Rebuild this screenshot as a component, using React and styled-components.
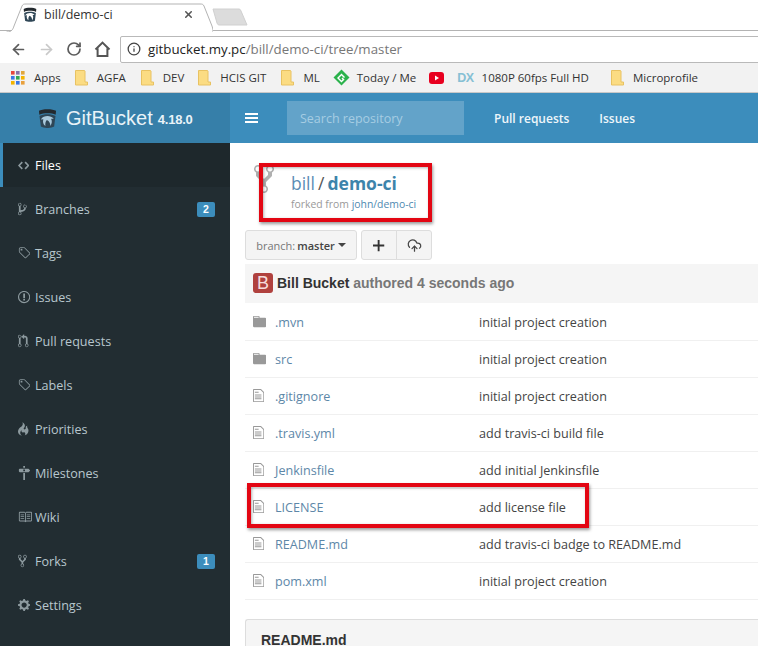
import React from 'react';
import styled, { createGlobalStyle } from 'styled-components';
import { ArrowLeft, ArrowRight, RotateCw, Info, X, CloudUpload } from 'lucide-react';

const Global = createGlobalStyle`
  html, body { margin: 0; padding: 0; background: #fff; }
  * { box-sizing: border-box; }
`;

const P = {
  code: [14, 'M9.5 3L8 4.5 11.5 8 8 11.5 9.5 13 14 8 9.5 3zm-5 0L0 8l4.5 5L6 11.5 2.5 8 6 4.5 4.5 3z'],
  branch: [10, 'M10 5c0-1.11-.89-2-2-2a1.993 1.993 0 0 0-1 3.72v.3c-.02.52-.23.98-.63 1.38-.4.4-.86.61-1.38.63-.83.02-1.48.16-2 .45V4.72a1.993 1.993 0 0 0-1-3.72C.88 1 0 1.89 0 3a2 2 0 0 0 1 1.72v6.56c-.59.35-1 .99-1 1.72 0 1.11.89 2 2 2 1.11 0 2-.89 2-2 0-.53-.2-1-.53-1.36.09-.06.48-.41.59-.47.25-.11.56-.17.94-.17 1.05-.05 1.95-.45 2.75-1.25S8.95 7.77 9 6.73h-.02C9.59 6.37 10 5.73 10 5zM2 1.8c.66 0 1.2.55 1.2 1.2 0 .65-.55 1.2-1.2 1.2C1.35 4.2.8 3.65.8 3c0-.65.55-1.2 1.2-1.2zm0 12.41c-.66 0-1.2-.55-1.2-1.2 0-.65.55-1.2 1.2-1.2.65 0 1.2.55 1.2 1.2 0 .65-.55 1.2-1.2 1.2zm6-8c-.66 0-1.2-.55-1.2-1.2 0-.65.55-1.2 1.2-1.2.65 0 1.2.55 1.2 1.2 0 .65-.55 1.2-1.2 1.2z'],
  tag: [14, 'M7.73 1.73C7.26 1.26 6.62 1 5.96 1H3.5C2.13 1 1 2.13 1 3.5v2.47c0 .66.27 1.3.73 1.77l6.06 6.06c.39.39 1.02.39 1.41 0l4.59-4.59a.996.996 0 0 0 0-1.41L7.73 1.73zM2.38 7.09c-.31-.3-.47-.7-.47-1.13V3.5c0-.88.72-1.59 1.59-1.59h2.47c.42 0 .83.16 1.13.47l6.14 6.13-4.73 4.73-6.13-6.15zM3.01 3h2v2H3V3h.01z'],
  issue: [14, 'M7 2.3c3.14 0 5.7 2.56 5.7 5.7s-2.56 5.7-5.7 5.7A5.71 5.71 0 0 1 1.3 8c0-3.14 2.56-5.7 5.7-5.7zM7 1C3.14 1 0 4.14 0 8s3.14 7 7 7 7-3.14 7-7-3.14-7-7-7zm1 3H6v5h2V4zm0 6H6v2h2v-2z'],
  pull: [12, 'M11 11.28V5c-.03-.78-.34-1.47-.94-2.06C9.46 2.35 8.78 2.03 8 2H7V0L4 3l3 3V4h1c.27.02.48.11.69.31.21.2.3.42.31.69v6.28A1.993 1.993 0 0 0 10 15a1.993 1.993 0 0 0 1-3.72zm-1 2.92c-.66 0-1.2-.55-1.2-1.2 0-.65.55-1.2 1.2-1.2.65 0 1.2.55 1.2 1.2 0 .65-.55 1.2-1.2 1.2zM4 3c0-1.11-.89-2-2-2a1.993 1.993 0 0 0-1 3.72v6.56A1.993 1.993 0 0 0 2 15a1.993 1.993 0 0 0 1-3.72V4.72c.59-.34 1-.98 1-1.72zm-.8 10c0 .66-.55 1.2-1.2 1.2-.65 0-1.2-.55-1.2-1.2 0-.65.55-1.2 1.2-1.2.65 0 1.2.55 1.2 1.2zM2 4.2C1.34 4.2.8 3.65.8 3c0-.65.55-1.2 1.2-1.2.65 0 1.2.55 1.2 1.2 0 .65-.55 1.2-1.2 1.2z'],
  flame: [12, 'M5.05.31c.81 2.17.41 3.38-.52 4.31C3.55 5.67 1.98 6.45.9 7.98c-1.45 2.05-1.7 6.53 3.53 7.7-2.2-1.16-2.67-4.52-.3-6.61-.61 2.03.53 3.33 1.94 2.86 1.39-.47 2.3.53 2.27 1.67-.02.78-.31 1.44-1.13 1.81 3.42-.59 4.78-3.42 4.78-5.56 0-2.84-2.53-3.22-1.25-5.61-1.52.13-2.03 1.13-1.89 2.75.09 1.08-1.02 1.8-1.86 1.33-.67-.41-.66-1.19-.06-1.78C8.18 5.31 8.68 2.45 5.05.32L5.03.3l.2.01z'],
  milestone: [14, 'M8 2H6V0h2v2zm4 5H2c-.55 0-1-.45-1-1V4c0-.55.45-1 1-1h10l2 2-2 2zM8 4H6v2h2V4zM6 16h2V8H6v8z'],
  book: [16, 'M3 5h4v1H3V5zm0 3h4V7H3v1zm0 2h4V9H3v1zm11-5h-4v1h4V5zm0 2h-4v1h4V7zm0 2h-4v1h4V9zm2-6v9c0 .55-.45 1-1 1H9.5l-1 1-1-1H2c-.55 0-1-.45-1-1V3c0-.55.45-1 1-1h5.5l1 1 1-1H15c.55 0 1 .45 1 1zm-8 .5L7.5 3H2v9h6V3.5zm7-.5H9.5l-.5.5V12h6V3z'],
  fork: [10, 'M8 1a1.993 1.993 0 0 0-1 3.72V6L5 8 3 6V4.72A1.993 1.993 0 0 0 2 1a1.993 1.993 0 0 0-1 3.72V6.5l3 3v1.78A1.993 1.993 0 0 0 5 15a1.993 1.993 0 0 0 1-3.72V9.5l3-3V4.72A1.993 1.993 0 0 0 8 1zM2 4.2C1.34 4.2.8 3.65.8 3c0-.65.55-1.2 1.2-1.2.65 0 1.2.55 1.2 1.2 0 .65-.55 1.2-1.2 1.2zm3 10c-.66 0-1.2-.55-1.2-1.2 0-.65.55-1.2 1.2-1.2.65 0 1.2.55 1.2 1.2 0 .65-.55 1.2-1.2 1.2zm3-10c-.66 0-1.2-.55-1.2-1.2 0-.65.55-1.2 1.2-1.2.65 0 1.2.55 1.2 1.2 0 .65-.55 1.2-1.2 1.2z'],
  gear: [14, 'M14 8.77v-1.6l-1.94-.64-.45-1.09.88-1.84-1.13-1.13-1.81.91-1.09-.45-.69-1.92h-1.6l-.63 1.94-1.11.45-1.84-.88-1.13 1.13.91 1.81-.45 1.09L0 7.23v1.59l1.94.64.45 1.09-.88 1.84 1.13 1.13 1.81-.91 1.09.45.69 1.92h1.59l.63-1.94 1.11-.45 1.84.88 1.13-1.13-.92-1.81.47-1.09L14 8.75v.02zM7 11c-1.66 0-3-1.34-3-3s1.34-3 3-3 3 1.34 3 3-1.34 3-3 3z'],
  file: [12, 'M6 5H2V4h4v1zM2 8h7V7H2v1zm0 2h7V9H2v1zm0 2h7v-1H2v1zm10-7.5V14c0 .55-.45 1-1 1H1c-.55 0-1-.45-1-1V2c0-.55.45-1 1-1h7.5L12 4.5zM11 5L8 2H1v12h10V5z'],
  dir: [14, 'M13 4H7V3c0-.66-.31-1-1-1H1c-.55 0-1 .45-1 1v10c0 .55.45 1 1 1h12c.55 0 1-.45 1-1V5c0-.55-.45-1-1-1zM6 4H1V3h5v1z'],
  plus: [12, 'M12 9H7v5H5V9H0V7h5V2h2v5h5v2z'],
};

const Octicon = ({ name, h = 16, color = 'currentColor' }) => {
  const [w, d] = P[name];
  return (
    <svg width={(w * h) / 16} height={h} viewBox={`0 0 ${w} 16`} fill={color} style={{ display: 'block', flex: 'none' }}>
      <path fillRule="evenodd" d={d} />
    </svg>
  );
};

const BucketLogo = ({ size = 20, swoosh = '#a9c9dc' }) => (
  <svg width={size} height={size * 1.1} viewBox="0 0 20 22" style={{ display: 'block', flex: 'none' }}>
    <path d="M1 3 C4 0.6 16 0.6 19 3 L18.6 7 C14 5 6 5 1.4 7 Z" fill="#23292e" />
    <path d="M1.6 8.5 C6 6 14 6 18.4 8.5 L17 19.5 C14 21.6 6 21.6 3 19.5 Z" fill="#2f4656" />
    <path d="M3 12 C6 7.6 13 7.4 16.6 11.2 L13.8 11.4 C15 13.5 14.8 16.5 13 19 C13 16 12 14 9.4 12.6 C8 14 7.4 16 7.8 19 C5.4 17.6 4.8 14.4 5.6 11.8 Z" fill={swoosh} />
  </svg>
);

const HomeIcon = () => (
  <svg width="17" height="16" viewBox="0 0 17 16" fill="none" stroke="#555" strokeWidth="2" style={{ display: 'block' }}>
    <path d="M1.5 8.5 8.5 1.6l7 6.9" />
    <path d="M3.6 7.2V15h9.8V7.2" />
  </svg>
);

const Folder = () => (
  <svg width="13" height="16" viewBox="0 0 13 16" style={{ display: 'block', flex: 'none' }}>
    <path d="M.5.5h9l.5.5v11h2.5v3H.5z" fill="#fbdc83" stroke="#e8c262" />
  </svg>
);

const AppsIcon = () => {
  const c = ['#e8453c', '#8a6fa8', '#e0a63c', '#3b78e7', '#34a853', '#f4b400', '#f4b400', '#3b78e7', '#e8a03c'];
  return (
    <svg width="14" height="14" viewBox="0 0 14 14" style={{ display: 'block', flex: 'none' }}>
      {c.map((f, i) => <rect key={i} x={(i % 3) * 5} y={Math.floor(i / 3) * 5} width="3.6" height="3.6" fill={f} />)}
    </svg>
  );
};

const Feedly = () => (
  <svg width="17" height="17" viewBox="0 0 17 17" style={{ display: 'block', flex: 'none' }}>
    <path d="M8.5.5 16.5 8.5 8.5 16.5.5 8.5z" fill="#2bb24c" />
    <path d="M8.5 4.5 12 8l-1 1-2.5-2.4L6 9l2.5 2.4 1-1-1-1 1-1 2 2-3 3L4 9z" fill="#fff" />
  </svg>
);

const YouTube = () => (
  <svg width="15" height="12" viewBox="0 0 15 12" style={{ display: 'block', flex: 'none' }}>
    <rect width="15" height="12" rx="3" fill="#e8001f" />
    <path d="M6 3.5v5L10 6z" fill="#fff" />
  </svg>
);

const Page = styled.div`
  position: relative;
  width: 758px;
  height: 646px;
  overflow: hidden;
  display: flex;
  flex-direction: column;
  font-family: "Open Sans", sans-serif;
`;

const TabStrip = styled.div`
  height: 31px;
  flex: none;
  background: #fff;
  border-bottom: 1px solid #b3b3b3;
  display: flex;
  align-items: flex-end;
  padding-left: 6px;
`;
const Tab = styled.div`
  position: relative;
  width: 207px;
  height: 29px;
  margin-bottom: -1px;
  display: flex;
  align-items: center;
  padding: 0 19px 4px 17px;
  font: 12.5px "Open Sans", sans-serif;
  color: #333;
  & > svg.shape { position: absolute; left: 0; top: 0; }
  & > *:not(.shape) { position: relative; }
`;
const TabTitle = styled.span`
  flex: 1;
  margin-left: 7px;
`;
const NewTab = styled.svg`
  display: block;
  margin: 0 0 4px -1px;
`;
const Toolbar = styled.div`
  height: 32px;
  flex: none;
  background: #fff;
  display: flex;
  align-items: center;
  padding: 4px 0 0 10px;
  color: #5a5a5a;
`;
const NavButton = styled.span`
  width: 28px;
  height: 24px;
  display: flex;
  align-items: center;
  color: ${(p) => (p.$off ? '#c9c9c9' : '#5c5c5c')};
  margin-right: ${(p) => p.$mr || 0}px;
`;
const Omnibox = styled.div`
  flex: 1;
  height: 27px;
  margin-right: -6px;
  border: 1px solid #b9b9b9;
  border-radius: 2px;
  display: flex;
  align-items: center;
  padding-left: 6px;
  gap: 7px;
  font: 13.3px "Open Sans", sans-serif;
  color: #777;
  white-space: nowrap;
  & b { font-weight: 400; color: #222; }
`;
const Bookmarks = styled.div`
  height: 30px;
  flex: none;
  background: #f2f2f2;
  border-bottom: 1px solid #c8c8c8;
  display: flex;
  align-items: center;
  padding-left: 11px;
  font: 11.5px "Open Sans", sans-serif;
  color: #333;
  white-space: nowrap;
`;
const Mark = styled.span`
  display: flex;
  align-items: center;
  gap: ${(p) => p.$gap || 9}px;
  margin-right: ${(p) => p.$mr}px;
`;
const DxMark = styled.span`
  font: 700 12.5px "Liberation Sans", sans-serif;
  color: #86c0d4;
  letter-spacing: -0.5px;
`;

const Navbar = styled.header`
  height: 50px;
  flex: none;
  display: flex;
  background: #3c8dbc;
  color: #fff;
`;
const Brand = styled.div`
  width: 230px;
  flex: none;
  background: #367fa9;
  display: flex;
  align-items: center;
  padding-left: 38px;
  gap: 9px;
  font-family: "Liberation Sans", sans-serif;
  color: #e9f3f8;
`;
const BrandName = styled.span`
  font-size: 20px;
`;
const BrandVersion = styled.span`
  font-size: 13px;
  font-weight: 700;
  margin: 3px 0 0 -4px;
  letter-spacing: -0.2px;
`;
const Burger = styled.div`
  width: 13px;
  margin-left: 15px;
  align-self: center;
  height: 10px;
  border-top: 2px solid #fff;
  border-bottom: 2px solid #fff;
  position: relative;
  &::after { content: ""; position: absolute; left: 0; right: 0; top: 2px; height: 2px; background: #fff; }
`;
const Search = styled.div`
  width: 177px;
  height: 34px;
  margin: 8px 30px 0 29px;
  background: rgba(255, 255, 255, 0.2);
  color: #a6cde3;
  display: flex;
  align-items: center;
  padding-left: 13px;
  font-size: 12.5px;
`;
const NavLink = styled.span`
  align-self: center;
  font-size: 12px;
  font-weight: 600;
  margin-right: 30px;
  color: #eef6fa;
`;

const Body = styled.div`
  flex: 1;
  display: flex;
  min-height: 0;
`;
const Sidebar = styled.nav`
  width: 230px;
  flex: none;
  background: #222d32;
`;
const Item = styled.div`
  height: 44px;
  display: flex;
  align-items: center;
  padding: 0 15px 0 ${(p) => (p.$active ? 15 : 18)}px;
  border-left: ${(p) => (p.$active ? '3px solid #3c8dbc' : 'none')};
  background: ${(p) => (p.$active ? '#1e282c' : 'transparent')};
  color: ${(p) => (p.$active ? '#fff' : '#b8c7ce')};
  font-size: 12.6px;
`;
const ItemIcon = styled.span`
  width: 17px;
  flex: none;
  color: #8d9a9f;
  display: flex;
  align-items: center;
`;
const ItemLabel = styled.span`
  flex: 1;
`;
const Badge = styled.span`
  background: #3c8dbc;
  color: #fff;
  font: 700 10.5px "Liberation Sans", sans-serif;
  width: 18px;
  height: 15px;
  border-radius: 2px;
  display: flex;
  align-items: center;
  justify-content: center;
`;

const Main = styled.main`
  flex: 1;
  min-width: 0;
  padding-left: 15px;
`;
const RepoHead = styled.div`
  height: 87px;
  position: relative;
  padding: 29px 0 0 46px;
`;
const ForkMark = styled.span`
  position: absolute;
  left: 9px;
  top: 20px;
  color: #b0b0b0;
`;
const RepoTitle = styled.div`
  font-size: 17.5px;
  line-height: 22px;
  color: #5a8db5;
  word-spacing: -1.5px;
  & b { color: #3c84ab; font-weight: 700; }
  & i { font-style: normal; color: #555; }
`;
const ForkedFrom = styled.div`
  font-size: 10.4px;
  line-height: 20px;
  color: #999;
  & span { color: #4f8ab1; }
`;
const ButtonRow = styled.div`
  display: flex;
  gap: 4px;
  height: 30px;
`;
const BtnGroup = styled.div`
  display: flex;
`;
const Btn = styled.div`
  width: ${(p) => p.$w}px;
  height: 30px;
  background: #f4f4f4;
  border: 1px solid #ddd;
  border-radius: ${(p) => p.$r || '3px'};
  margin-left: ${(p) => (p.$join ? '-1px' : 0)};
  display: flex;
  align-items: center;
  justify-content: center;
  gap: 2px;
  font-size: 11px;
  color: #777;
  & b { color: #444; font-weight: 600; }
`;
const Caret = styled.span`
  width: 0;
  height: 0;
  margin-left: 1px;
  border: 4px solid transparent;
  border-top-color: #444;
  border-bottom: 0;
`;
const CommitHead = styled.div`
  height: 40px;
  margin-top: 4px;
  background: linear-gradient(#f5f5f5 39px, #fff 39px);
  display: flex;
  align-items: center;
  padding: 0 0 2px 8px;
  gap: 4px;
  font: 700 14px "Liberation Sans", sans-serif;
  color: #777;
  & b { color: #333; }
`;
const Avatar = styled.span`
  width: 20px;
  height: 20px;
  border-radius: 3px;
  background: #b0413e;
  color: #f6dcdc;
  font: 400 18px "Liberation Sans", sans-serif;
  display: flex;
  align-items: center;
  justify-content: center;
`;
const FileRow = styled.div`
  height: 37px;
  display: grid;
  grid-template-columns: 204px 1fr;
  align-items: center;
  padding-left: 30px;
  position: relative;
  border-bottom: 1px solid #f0f0f0;
  font-size: 12.6px;
  white-space: nowrap;
  &:last-of-type { border-bottom: 0; }
`;
const FileIcon = styled.span`
  position: absolute;
  left: 8px;
  top: 10px;
  color: #999;
`;
const FileName = styled.span`
  color: #5d87a8;
`;
const FileMsg = styled.span`
  color: #444;
`;
const ReadmeBox = styled.div`
  margin-top: 19px;
  height: 40px;
  background: #f5f5f5;
  border: 1px solid #ddd;
  border-right: 0;
  border-bottom: 0;
  border-radius: 3px 0 0 0;
  padding: 12px 15px;
  font: 700 14px "Liberation Sans", sans-serif;
  color: #333;
`;
const RedBox = styled.div`
  position: absolute;
  left: ${(p) => p.$x}px;
  top: ${(p) => p.$y}px;
  width: ${(p) => p.$w}px;
  height: ${(p) => p.$h}px;
  border: 4px solid #e30613;
  box-shadow: 1px 2px 3px rgba(0, 0, 0, 0.4), inset 1px 1px 3px rgba(0, 0, 0, 0.3);
  pointer-events: none;
`;

const items = [
  ['code', 'Files', null, true],
  ['branch', 'Branches', 2],
  ['tag', 'Tags'],
  ['issue', 'Issues'],
  ['pull', 'Pull requests'],
  ['tag', 'Labels'],
  ['flame', 'Priorities'],
  ['milestone', 'Milestones'],
  ['book', 'Wiki'],
  ['fork', 'Forks', 1],
  ['gear', 'Settings'],
];

const files = [
  ['dir', '.mvn', 'initial project creation'],
  ['dir', 'src', 'initial project creation'],
  ['file', '.gitignore', 'initial project creation'],
  ['file', '.travis.yml', 'add travis-ci build file'],
  ['file', 'Jenkinsfile', 'add initial Jenkinsfile'],
  ['file', 'LICENSE', 'add license file'],
  ['file', 'README.md', 'add travis-ci badge to README.md'],
  ['file', 'pom.xml', 'initial project creation'],
];

export default function App() {
  return (
    <Page>
      <Global />
      <TabStrip>
        <Tab>
          <svg className="shape" width="207" height="30" viewBox="0 0 207 30">
            <path d="M0.5 30 C6 30 7 27 8 24 L16 4 C17 2 18 2 20 2 H194 C196 2 197 2 198 4 L206 24 C207 27 207 29 207 30" fill="#fff" stroke="#b3b3b3" />
          </svg>
          <BucketLogo size={14} swoosh="#fff" />
          <TabTitle>bill/demo-ci</TabTitle>
          <X size={11} strokeWidth={3.4} color="#555" />
        </Tab>
        <NewTab width="36" height="18" viewBox="0 0 36 18">
          <path d="M1 1H26C28 1 28 1 29 3L35 17H8C6 17 6 17 5 15Z" fill="#dcdcdc" stroke="#d0d0d0" />
        </NewTab>
      </TabStrip>
      <Toolbar>
        <NavButton><ArrowLeft size={17} strokeWidth={2.4} /></NavButton>
        <NavButton $off><ArrowRight size={17} strokeWidth={2.4} /></NavButton>
        <NavButton><RotateCw size={16} strokeWidth={2.6} /></NavButton>
        <NavButton $mr={-2}><HomeIcon /></NavButton>
        <Omnibox>
          <Info size={14} color="#444" strokeWidth={2.2} />
          <span><b>gitbucket.my.pc</b>/bill/demo-ci/tree/master</span>
        </Omnibox>
      </Toolbar>
      <Bookmarks>
        <Mark $mr={14} $gap={9}><AppsIcon />Apps</Mark>
        <Mark $mr={15} $gap={9}><Folder />AGFA</Mark>
        <Mark $mr={14} $gap={9}><Folder />DEV</Mark>
        <Mark $mr={15} $gap={9}><Folder />HCIS GIT</Mark>
        <Mark $mr={13} $gap={9}><Folder />ML</Mark>
        <Mark $mr={13} $gap={7}><Feedly />Today / Me</Mark>
        <Mark $mr={13}><YouTube /></Mark>
        <Mark $mr={22} $gap={8}><DxMark>DX</DxMark>1080P 60fps Full HD</Mark>
        <Mark $mr={0} $gap={9}><Folder />Microprofile</Mark>
      </Bookmarks>
      <Navbar>
        <Brand>
          <BucketLogo size={19} />
          <BrandName>GitBucket</BrandName>
          <BrandVersion>4.18.0</BrandVersion>
        </Brand>
        <Burger />
        <Search>Search repository</Search>
        <NavLink>Pull requests</NavLink>
        <NavLink>Issues</NavLink>
      </Navbar>
      <Body>
        <Sidebar>
          {items.map(([icon, label, badge, active]) => (
            <Item key={label} $active={active}>
              <ItemIcon><Octicon name={icon} h={icon === 'code' ? 13 : 14} /></ItemIcon>
              <ItemLabel>{label}</ItemLabel>
              {badge && <Badge>{badge}</Badge>}
            </Item>
          ))}
        </Sidebar>
        <Main>
          <RepoHead>
            <ForkMark><Octicon name="fork" h={32} /></ForkMark>
            <RepoTitle>bill <i>/</i> <b>demo-ci</b></RepoTitle>
            <ForkedFrom>forked from <span>john/demo-ci</span></ForkedFrom>
          </RepoHead>
          <ButtonRow>
            <Btn $w={112}>branch: <b>master</b><Caret /></Btn>
            <BtnGroup>
              <Btn $w={36} $r="3px 0 0 3px"><Octicon name="plus" h={15} color="#333" /></Btn>
              <Btn $w={36} $r="0 3px 3px 0" $join><CloudUpload size={15} color="#444" /></Btn>
            </BtnGroup>
          </ButtonRow>
          <CommitHead>
            <Avatar>B</Avatar>
            <span><b>Bill Bucket</b> authored 4 seconds ago</span>
          </CommitHead>
          {files.map(([icon, name, msg]) => (
            <FileRow key={name}>
              <FileIcon><Octicon name={icon} h={15} /></FileIcon>
              <FileName>{name}</FileName>
              <FileMsg>{msg}</FileMsg>
            </FileRow>
          ))}
          <ReadmeBox>README.md</ReadmeBox>
        </Main>
      </Body>
      <RedBox $x={259} $y={163} $w={173} $h={59} />
      <RedBox $x={247} $y={483} $w={342} $h={45} />
    </Page>
  );
}
